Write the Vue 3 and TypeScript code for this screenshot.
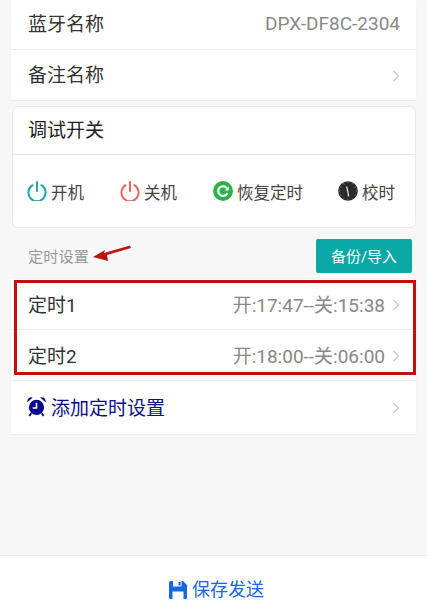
<script setup lang="ts">
interface Timer { name: string; value: string }
const timers: Timer[] = [
  { name: '定时1', value: '开:17:47--关:15:38' },
  { name: '定时2', value: '开:18:00--关:06:00' },
]
const ticks: number[] = [0, 30, 60, 90, 120, 150, 180, 210, 240, 270, 300, 330]
</script>

<template>
  <div class="page">
    <section class="card first">
      <div class="row short">
        <span class="label">蓝牙名称</span>
        <span class="value device">DPX-DF8C-2304</span>
      </div>
      <div class="row">
        <span class="label">备注名称</span>
        <svg class="chev" viewBox="0 0 8 12"><path d="M1.5 1l5 5-5 5" /></svg>
      </div>
    </section>

    <section class="debug">
      <div class="debug-title">调试开关</div>
      <div class="debug-actions">
        <div class="action">
          <svg class="ico" viewBox="0 0 20 20" fill="none" stroke="#1fa7a8" stroke-width="2" stroke-linecap="round">
            <path d="M5.6 4.2a8.6 8.6 0 1 0 8.8 0" /><path d="M10 1v9" />
          </svg>
          <span>开机</span>
        </div>
        <div class="action">
          <svg class="ico" viewBox="0 0 20 20" fill="none" stroke="#e8675f" stroke-width="2" stroke-linecap="round">
            <path d="M5.6 4.2a8.6 8.6 0 1 0 8.8 0" /><path d="M10 1v9" />
          </svg>
          <span>关机</span>
        </div>
        <div class="action">
          <svg class="ico" viewBox="0 0 20 20">
            <circle cx="10" cy="10" r="10" fill="#2bb24c" />
            <path d="M14.3 12.2A4.8 4.8 0 1 1 14 7.4" fill="none" stroke="#fff" stroke-width="2.2" />
            <path d="M15.8 5.6v4h-4z" fill="#fff" />
          </svg>
          <span>恢复定时</span>
        </div>
        <div class="action">
          <svg class="ico" viewBox="0 0 20 20">
            <circle cx="10" cy="10" r="9.8" fill="#2b2b2b" />
            <path
              v-for="a in ticks"
              :key="a"
              d="M10 1.2v1"
              stroke="#999"
              stroke-width="0.8"
              :transform="`rotate(${a} 10 10)`"
            />
            <path d="M8.600 5.500L9.800 10.500L10.600 15.500" fill="none" stroke="#eee" stroke-width="1.200" />
          </svg>
          <span>校时</span>
        </div>
      </div>
    </section>

    <header class="section-head">
      <span class="section-label">定时设置</span>
      <svg class="note-arrow" viewBox="0 0 38 17">
        <path d="M0 12L12 5 11 8 37 .5 38 3 14 10 15 16z" fill="#bb1410" />
      </svg>
      <button class="backup" type="button">备份/导入</button>
    </header>

    <section class="card timers">
      <div v-for="t in timers" :key="t.name" class="row timer">
        <span class="label">{{ t.name }}</span>
        <span class="value">{{ t.value }}</span>
        <svg class="chev" viewBox="0 0 8 12"><path d="M1.5 1l5 5-5 5" /></svg>
      </div>
      <div class="row add">
        <svg class="alarm" viewBox="0 0 20 22">
          <circle cx="10" cy="12" r="8" fill="#0b0b8c" />
          <path d="M.5 6.500A4.200 4.200 0 0 1 6 1.500zM19.500 6.500A4.200 4.200 0 0 0 14 1.500z" fill="#0b0b8c" />
          <path d="M4.500 18l-2 3M15.500 18l2 3" stroke="#0b0b8c" stroke-width="2" />
          <path d="M10 7v5.500H6" fill="none" stroke="#fff" stroke-width="1.600" />
        </svg>
        <span class="add-text">添加定时设置</span>
        <svg class="chev" viewBox="0 0 8 12"><path d="M1.5 1l5 5-5 5" /></svg>
      </div>
      <div class="red-box"></div>
    </section>

    <footer class="footer">
      <svg class="save" viewBox="0 0 18 18">
        <path d="M0 1.500A1.500 1.500 0 0 1 1.500 0H14l4 4v12.500a1.500 1.500 0 0 1-1.500 1.500h-15A1.500 1.500 0 0 1 0 16.500z" fill="#1668dc" />
        <path d="M4 0h8.500v5.500H4z" fill="#fff" />
        <path d="M9.500 1h2v3.500h-2z" fill="#1668dc" />
        <path d="M3.500 10.500h11V18h-11z" fill="#fff" />
      </svg>
      <span class="save-text">保存发送</span>
    </footer>
  </div>
</template>

<style>
html, body { margin: 0; background: #f7f7f7; }
</style>

<style scoped>
.page {
  width: 427px;
  height: 600px;
  overflow: hidden;
  display: flex;
  flex-direction: column;
  background: #f7f7f7;
  font-family: Roboto, "Noto Sans CJK SC", sans-serif;
}
.card {
  margin: 0 11px;
  background: #fff;
  box-shadow: 0 1px 1px #ececec;
}
.first { height: 100px; }
.row {
  position: relative;
  height: 51px;
  display: flex;
  align-items: center;
  padding: 0 16px 0 17px;
  box-sizing: border-box;
  border-bottom: 1px solid #eeeeee;
}
.row.short { height: 50px; }
.first .row:last-child { border-bottom: none; }
.label { font-size: 19px; color: #333; flex: 1; }
.first .label { margin-bottom: 5px; }
.first .value { margin-bottom: 2px; }
.timer { padding-top: 2px; }
.timer .label, .timer .value { margin-bottom: 4px; }
.value { font-size: 19px; color: #888; }
.device { font-size: 19px; }
.chev {
  width: 8px;
  height: 12px;
  margin-left: 7px;
  fill: none;
  stroke: #c6c6c6;
  stroke-width: 1.200;
  flex: none;
}
.debug {
  margin: 6px 11px 0 12px;
  height: 122px;
  box-sizing: border-box;
  background: #fff;
  border: 1px solid #e9e9e9;
  border-radius: 6px;
}
.debug-title {
  height: 47px;
  line-height: 47px;
  padding-left: 15px;
  font-size: 19px;
  color: #222;
  border-bottom: 1px solid #e9e9e9;
}
.debug-actions {
  display: flex;
  align-items: center;
  gap: 36px;
  padding: 22px 0 0 14px;
}
.action {
  display: flex;
  align-items: center;
  gap: 4px;
  font-size: 16.500px;
  line-height: 22px;
  color: #444;
}
.action:last-child { margin-left: -1px; }
.action span { margin-top: 6px; }
.ico { width: 20px; height: 20px; flex: none; }
.section-head {
  position: relative;
  height: 51px;
  margin: 0 15px 0 28px;
  display: flex;
  align-items: flex-start;
  justify-content: space-between;
}
.section-label {
  margin-top: 20px;
  font-size: 15.250px;
  line-height: 18px;
  color: #999;
}
.note-arrow {
  position: absolute;
  left: 65px;
  top: 17px;
  width: 38px;
  height: 17px;
}
.backup {
  margin-top: 11px;
  width: 96px;
  height: 34px;
  border: none;
  border-radius: 2px;
  background: #0aa8a6;
  color: #fff;
  font-family: inherit;
  font-size: 15px;
  padding: 0 0 2px;
}
.timers { position: relative; }
.add { height: 53px; border-bottom: none; padding-left: 16px; }
.alarm { width: 19px; height: 21px; flex: none; margin-bottom: 2px; }
.add-text {
  flex: 1;
  margin-left: 5px;
  margin-bottom: 3px;
  font-size: 19px;
  color: #0b0b8c;
}
.red-box {
  position: absolute;
  left: 3px;
  top: 1px;
  width: 402px;
  height: 95px;
  box-sizing: border-box;
  border: 3px solid #c40e0e;
  pointer-events: none;
}
.footer {
  margin-top: auto;
  height: 45px;
  box-sizing: border-box;
  padding: 24px 0 0 6px;
  background: #fff;
  border-top: 1px solid #e6e6e6;
  display: flex;
  align-items: center;
  justify-content: center;
  gap: 5px;
  font-size: 18px;
  line-height: 20px;
  color: #1668dc;
}
.save-text { margin-bottom: 1px; }
.save { width: 18px; height: 18px; flex: none; }
</style>
